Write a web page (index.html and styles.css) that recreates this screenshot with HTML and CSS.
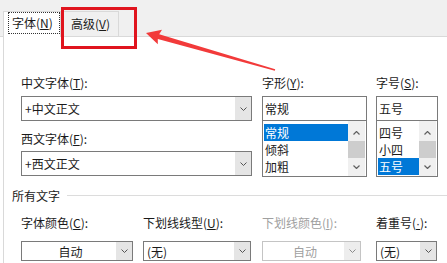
FILE: index.html
```html
<!DOCTYPE html>
<html lang="zh-CN">
<head>
<meta charset="utf-8">
<title>字体</title>
<link rel="stylesheet" href="styles.css">
</head>
<body>
<div class="tabs">
  <div class="tab active"><span class="focus">字体(<u>N</u>)</span></div>
  <div class="tab">高级(<u>V</u>)</div>
</div>
<div class="panel">
  <div class="fonts">
    <div class="col-main">
      <div class="lbl">中文字体(<u>T</u>):</div>
      <div class="combo big"><span class="val">+中文正文</span><span class="btn"><svg width="7" height="4" viewBox="0 0 7 4"><polyline points="0.5,0.5 3.5,3.5 6.5,0.5" fill="none" stroke="#555" stroke-width="1"/></svg></span></div>
      <div class="lbl second">西文字体(<u>F</u>):</div>
      <div class="combo big"><span class="val">+西文正文</span><span class="btn"><svg width="7" height="4" viewBox="0 0 7 4"><polyline points="0.5,0.5 3.5,3.5 6.5,0.5" fill="none" stroke="#555" stroke-width="1"/></svg></span></div>
    </div>
    <div class="col-style">
      <div class="lbl">字形(<u>Y</u>):</div>
      <div class="edit">常规</div>
      <div class="list">
        <div class="items">
          <div class="item sel">常规</div>
          <div class="item">倾斜</div>
          <div class="item">加粗</div>
        </div>
        <div class="sb">
          <div class="sb-up"><svg width="7" height="4" viewBox="0 0 7 4"><polyline points="0.5,3.5 3.5,0.5 6.5,3.5" fill="none" stroke="#606060" stroke-width="1.2"/></svg></div>
          <div class="sb-thumb"></div>
          <div class="sb-down"><svg width="7" height="4" viewBox="0 0 7 4"><polyline points="0.5,0.5 3.5,3.5 6.5,0.5" fill="none" stroke="#606060" stroke-width="1.2"/></svg></div>
        </div>
      </div>
    </div>
    <div class="col-size">
      <div class="lbl">字号(<u>S</u>):</div>
      <div class="edit">五号</div>
      <div class="list">
        <div class="items">
          <div class="item">四号</div>
          <div class="item">小四</div>
          <div class="item sel">五号</div>
        </div>
        <div class="sb">
          <div class="sb-up"><svg width="7" height="4" viewBox="0 0 7 4"><polyline points="0.5,3.5 3.5,0.5 6.5,3.5" fill="none" stroke="#606060" stroke-width="1.2"/></svg></div>
          <div class="sb-thumb"></div>
          <div class="sb-down"><svg width="7" height="4" viewBox="0 0 7 4"><polyline points="0.5,0.5 3.5,3.5 6.5,0.5" fill="none" stroke="#606060" stroke-width="1.2"/></svg></div>
        </div>
      </div>
    </div>
  </div>
  <div class="group-head"><span>所有文字</span><span class="rule"></span></div>
  <div class="row2">
    <div class="c c1">
      <div class="lbl">字体颜色(<u>C</u>):</div>
      <div class="combo small"><span class="val center">自动</span><span class="btn"><svg width="7" height="4" viewBox="0 0 7 4"><polyline points="0.5,0.5 3.5,3.5 6.5,0.5" fill="none" stroke="#555" stroke-width="1"/></svg></span></div>
    </div>
    <div class="c c2">
      <div class="lbl">下划线线型(<u>U</u>):</div>
      <div class="combo small"><span class="val">(无)</span><span class="btn"><svg width="7" height="4" viewBox="0 0 7 4"><polyline points="0.5,0.5 3.5,3.5 6.5,0.5" fill="none" stroke="#555" stroke-width="1"/></svg></span></div>
    </div>
    <div class="c c3">
      <div class="lbl disabled">下划线颜色(<u>I</u>):</div>
      <div class="combo small off"><span class="val center">自动</span><span class="btn"><svg width="7" height="4" viewBox="0 0 7 4"><polyline points="0.5,0.5 3.5,3.5 6.5,0.5" fill="none" stroke="#8a8a8a" stroke-width="1"/></svg></span></div>
    </div>
    <div class="c c4">
      <div class="lbl">着重号(<u class="dot">·</u>):</div>
      <div class="combo small"><span class="val">(无)</span><span class="btn"><svg width="7" height="4" viewBox="0 0 7 4"><polyline points="0.5,0.5 3.5,3.5 6.5,0.5" fill="none" stroke="#555" stroke-width="1"/></svg></span></div>
    </div>
  </div>
</div>
<div class="redbox"></div>
<svg class="arrow" width="447" height="263" viewBox="0 0 447 263">
  <polygon points="146,33 162,29.8 159.2,34.3 275.2,69.3 274.8,70.7 157.8,38.9 157.8,44.2" fill="#f23a3a"/>
</svg>
</body>
</html>
```
FILE: styles.css
```css
* { box-sizing: border-box; }
html, body { margin: 0; padding: 0; }
body {
  width: 447px;
  height: 263px;
  overflow: hidden;
  position: relative;
  background: #fff;
  font-family: "Noto Sans CJK SC", "Microsoft YaHei", sans-serif;
  font-size: 12px;
  color: #1a1a1a;
}
u { text-decoration: underline; text-underline-offset: 1px; }
u.dot { font-family: "Liberation Sans", sans-serif; }

.tabs {
  height: 37px;
  background: #f0f0f0;
  border-bottom: 1px solid #d9d9d9;
  display: flex;
  align-items: flex-end;
  padding-left: 3px;
}
.tab {
  height: 25px;
  width: 58px;
  border: 1px solid #d9d9d9;
  border-bottom: none;
  display: flex;
  align-items: center;
  line-height: 16px;
}
.tab + .tab { border-left: none; padding-left: 10px; }
.tab.active {
  background: #fff;
  height: 26px;
  margin-bottom: -1px;
  padding: 0 0 3px 4px;
  align-items: stretch;
}
.focus {
  flex: 1;
  border: 1px dotted #333;
  padding-left: 3px;
  display: flex;
  align-items: center;
}

.panel {
  margin-left: 3px;
  border-left: 1px solid #d9d9d9;
  padding: 38px 0 0 17px;
  height: 226px;
}
.lbl { line-height: 16px; height: 16px; white-space: nowrap; margin-bottom: 5px; }
.lbl.second { margin-top: 10px; margin-bottom: 4px; }
.lbl.disabled { color: #a0a0a0; }

.fonts { display: flex; }
.col-main { width: 231px; margin-right: 10px; }
.col-style { width: 105px; margin-right: 9px; }
.col-size { width: 62px; }

.combo {
  display: flex;
  border: 1px solid #7a7a7a;
  background: #fff;
}
.combo.big { height: 25px; }
.combo.small { height: 20px; }
.combo .val {
  flex: 1;
  padding-left: 3px;
  display: flex;
  align-items: center;
  white-space: nowrap;
}
.combo .val.center { justify-content: center; }
.combo .btn {
  width: 16px;
  background: #e5e5e5;
  display: flex;
  align-items: center;
  justify-content: center;
}
.combo.off { border-color: #c4c4c4; }
.combo.off .val { color: #a0a0a0; }
.combo.off .btn { background: #ededed; }

.edit {
  height: 25px;
  border: 1px solid #7a7a7a;
  padding-left: 2px;
  display: flex;
  align-items: center;
}
.list {
  height: 57px;
  margin-top: -1px;
  border: 1px solid #7a7a7a;
  display: flex;
}
.items { flex: 1; padding: 3px 0 0 1px; }
.item { height: 17px; line-height: 17px; padding-left: 1px; }
.item.sel { background: #0078d7; color: #fff; }
.sb {
  width: 17px;
  margin: 0 1px 0 0;
  background: #f0f0f0;
  display: flex;
  flex-direction: column;
}
.sb-up { height: 20px; display: flex; align-items: center; justify-content: center; padding-top: 3px; }
.sb-thumb { height: 17px; background: #cdcdcd; }
.sb-down { flex: 1; display: flex; align-items: center; justify-content: center; }

.group-head {
  margin: 11px 0 0 -9px;
  display: flex;
  align-items: center;
  line-height: 16px;
}
.rule { flex: 1; height: 1px; background: #dcdcdc; margin-left: 7px; margin-top: -1px; }

.row2 { display: flex; margin-top: 11px; }
.row2 .lbl { margin-bottom: 10px; }
.c1 { width: 112px; margin-right: 10px; }
.c2 { width: 108px; margin-right: 11px; }
.c3 { width: 99px; margin-right: 15px; }
.c4 { width: 61px; }

.redbox {
  position: absolute;
  left: 61px;
  top: 7px;
  width: 76px;
  height: 42px;
  border: 3px solid #e0141e;
}
.arrow {
  position: absolute;
  left: 0;
  top: 0;
  pointer-events: none;
}
```
